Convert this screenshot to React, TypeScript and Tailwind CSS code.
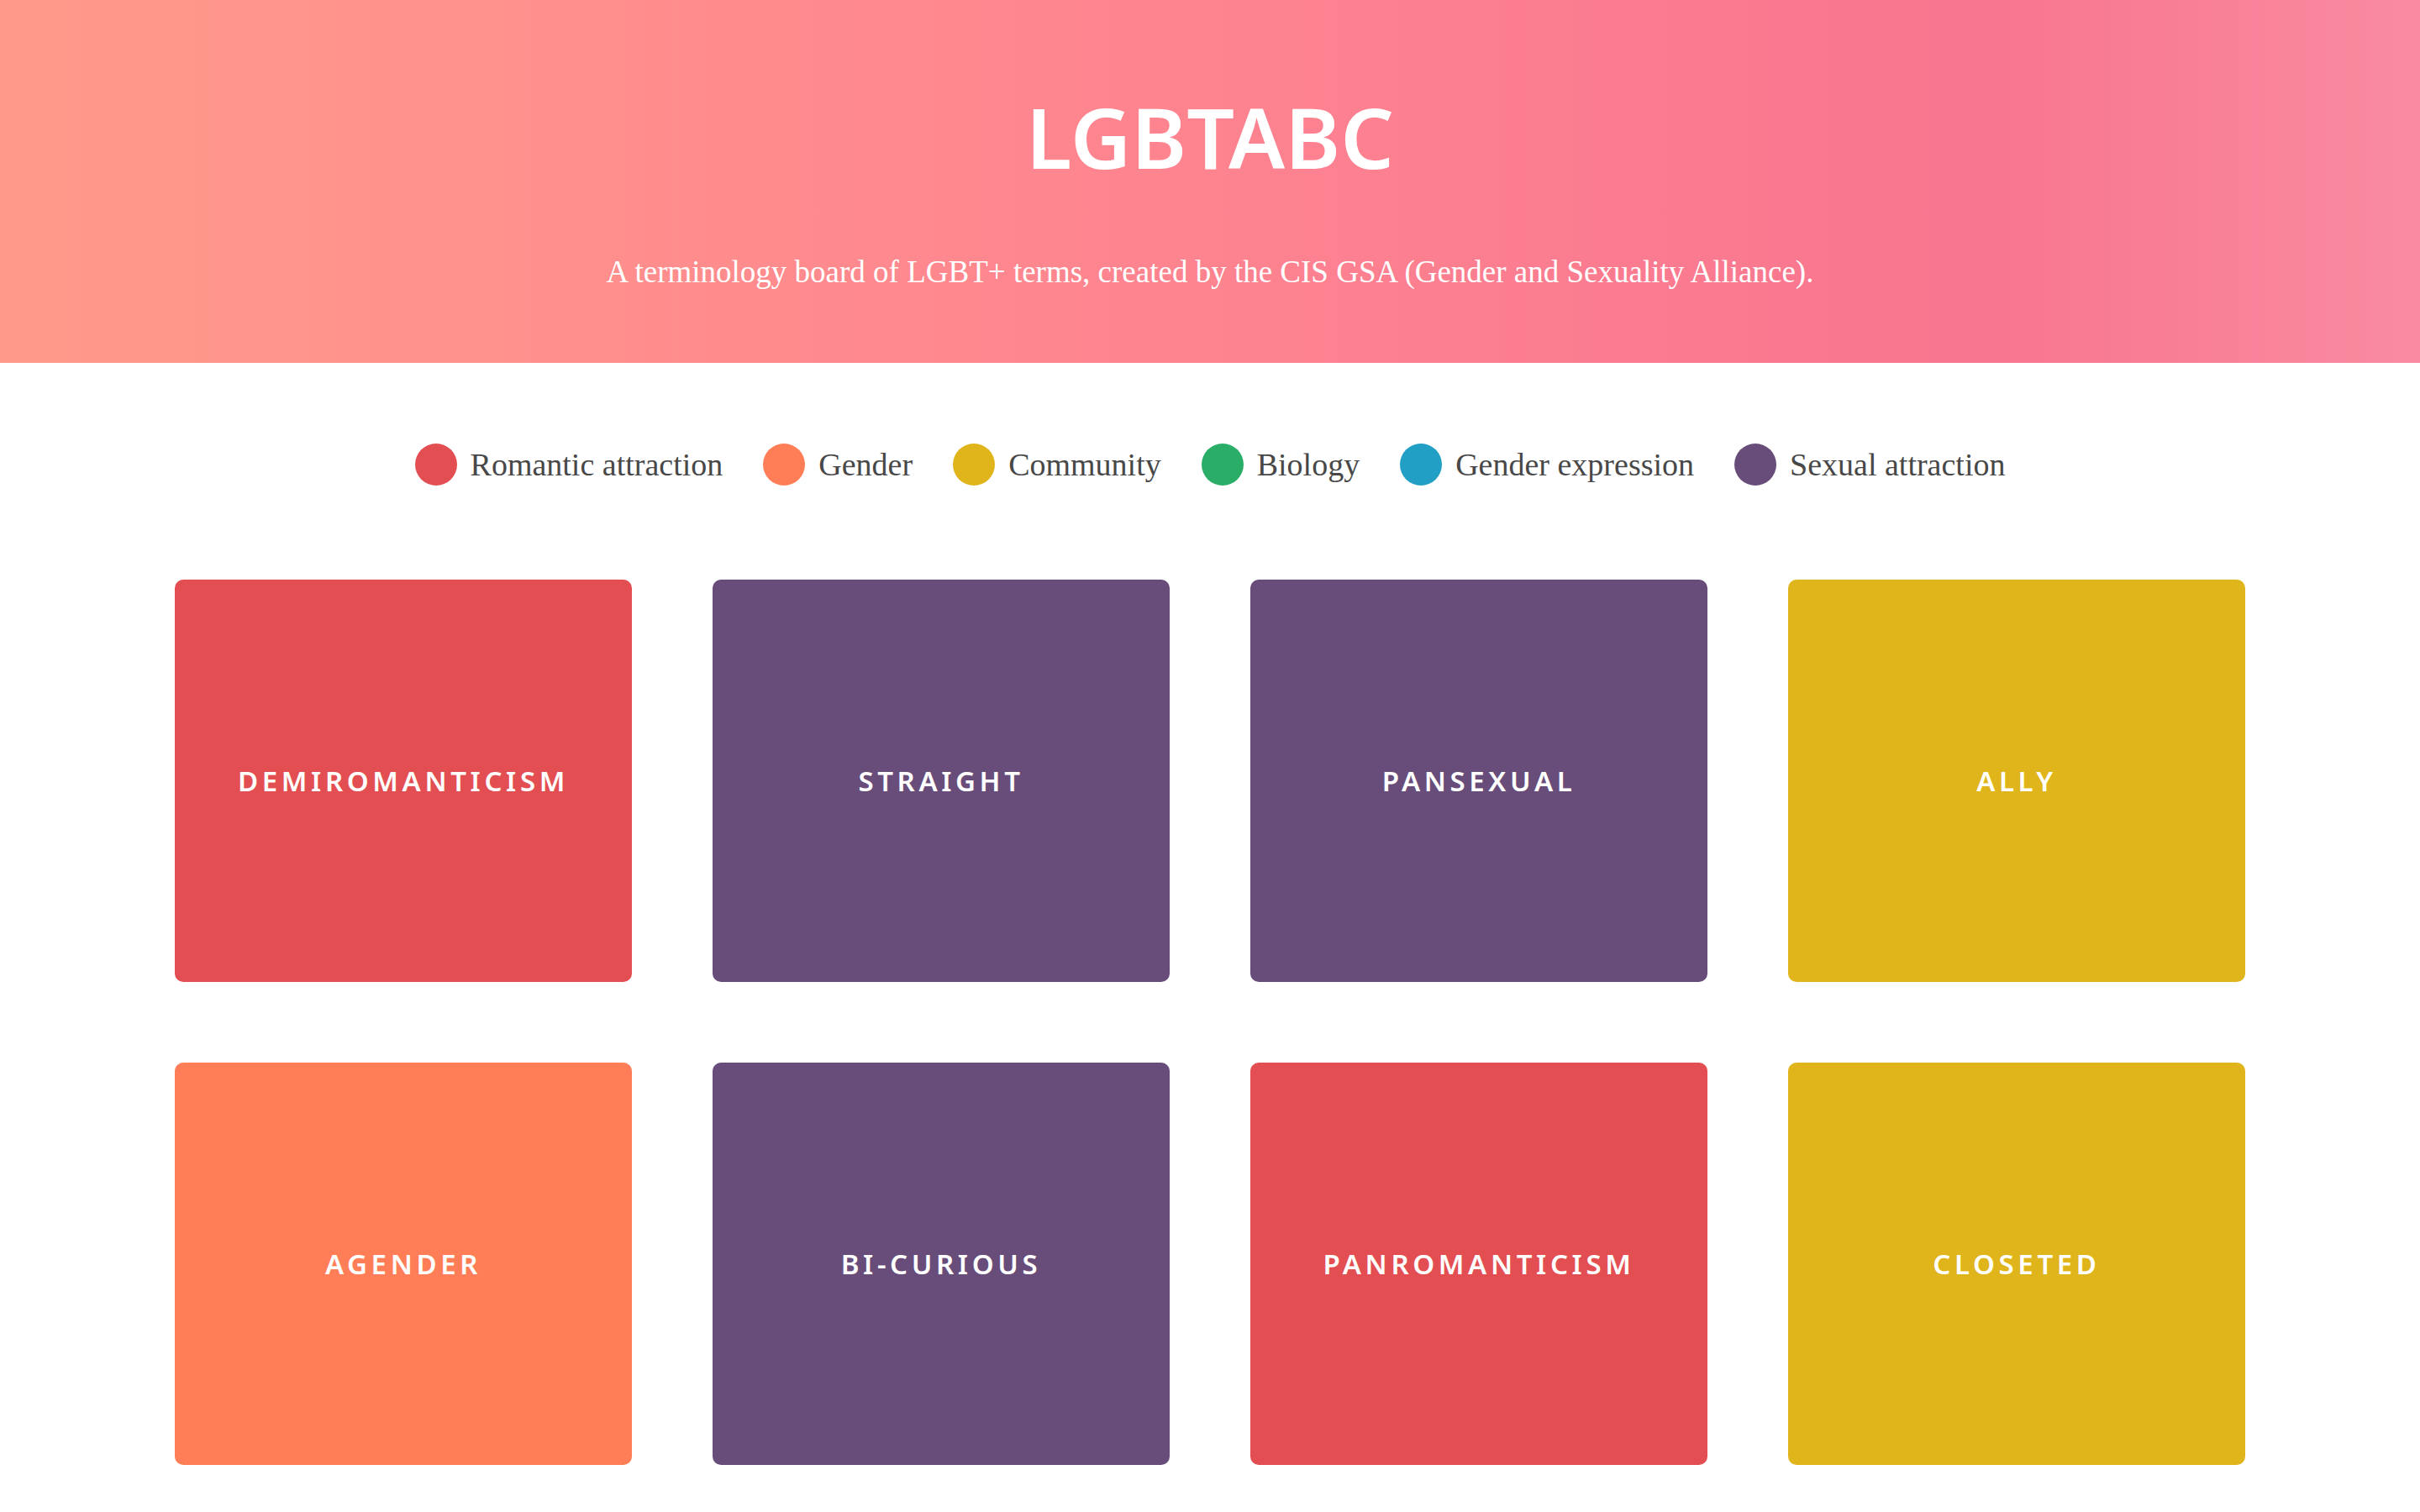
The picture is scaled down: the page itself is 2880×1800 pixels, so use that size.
const legend = [
  { label: "Romantic attraction", color: "bg-[#e24e51]" },
  { label: "Gender", color: "bg-[#ff7e57]" },
  { label: "Community", color: "bg-[#dfb51b]" },
  { label: "Biology", color: "bg-[#2aad66]" },
  { label: "Gender expression", color: "bg-[#219fc4]" },
  { label: "Sexual attraction", color: "bg-[#684d7a]" },
];

const terms = [
  { name: "Demiromanticism", color: "bg-[#e24e51]" },
  { name: "Straight", color: "bg-[#684d7a]" },
  { name: "Pansexual", color: "bg-[#684d7a]" },
  { name: "Ally", color: "bg-[#dfb51b]" },
  { name: "Agender", color: "bg-[#ff7e57]" },
  { name: "Bi-curious", color: "bg-[#684d7a]" },
  { name: "Panromanticism", color: "bg-[#e24e51]" },
  { name: "Closeted", color: "bg-[#dfb51b]" },
];

export default function App() {
  return (
    <div className="min-h-screen w-full bg-white">
      {/* header */}
      <header className="h-[432px] w-full flex flex-col items-center pt-[112px] bg-[linear-gradient(90deg,#ff9a8a_0%,#ff8a8e_35%,#fd8190_55%,#f8758f_82%,#f98ba0_100%)]">
        <h1 className="text-[100px] leading-none font-semibold text-white font-['Noto_Sans',sans-serif]">
          LGBTABC
        </h1>
        <p className="mt-[84px] text-[37px] leading-normal text-white font-['Liberation_Serif',serif]">
          A terminology board of LGBT+ terms, created by the CIS GSA (Gender and Sexuality Alliance).
        </p>
      </header>

      {/* legend */}
      <div className="mt-[94px] flex items-center justify-center gap-12">
        {legend.map((l) => (
          <div key={l.label} className="flex items-center gap-4">
            <span className={`w-[50px] h-[50px] rounded-full ${l.color}`} />
            <span className="text-[38px] leading-[54px] text-[#484848] font-['Liberation_Serif',serif]">
              {l.label}
            </span>
          </div>
        ))}
      </div>

      {/* term cards */}
      <div className="mt-[110px] px-[208px] grid grid-cols-4 gap-[96px]">
        {terms.map((t) => (
          <div
            key={t.name}
            className={`h-[479px] rounded-[10px] flex items-center justify-center ${t.color}`}
          >
            <span className="text-[33px] font-semibold uppercase tracking-[0.14em] text-white font-['Noto_Sans',sans-serif]">
              {t.name}
            </span>
          </div>
        ))}
      </div>
    </div>
  );
}
